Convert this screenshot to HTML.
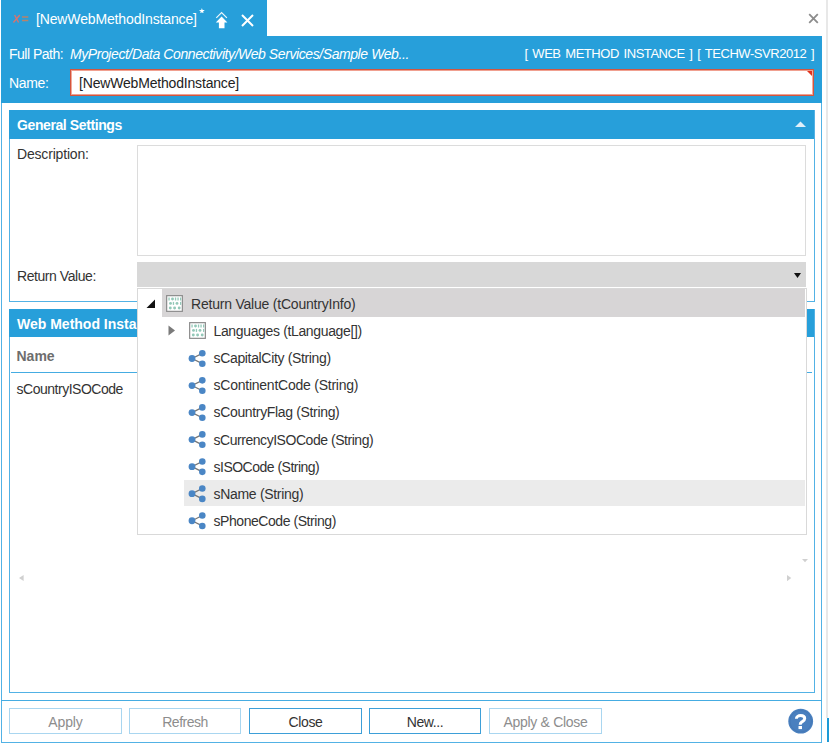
<!DOCTYPE html>
<html><head><meta charset="utf-8">
<style>
*{box-sizing:border-box;margin:0;padding:0}
html,body{width:829px;height:744px;overflow:hidden;background:#fff}
body{position:relative;font-family:"Liberation Sans",sans-serif;font-size:14px;color:#333}
.a{position:absolute}
.t{position:absolute;white-space:nowrap;line-height:16px}
.blue{background:#279fda}
.btn{position:absolute;top:708px;height:25.5px;border:1px solid #a9d6f0;background:#fff;color:#8d8d8d;text-align:center;line-height:16px;padding-top:5px;font-size:14px}
.btn.en{border-color:#3d9fd8;color:#333}
</style></head><body>

<!-- right gray edge -->
<div class="a" style="left:826px;top:0;width:2px;height:718px;background:#e8e8e8"></div>
<div class="a" style="left:826.5px;top:718px;width:2.5px;height:24px;background:#1e9ad6"></div>

<!-- tab -->
<div class="a blue" style="left:1px;top:0;width:266px;height:36px"></div>
<svg class="a" style="left:10px;top:12px" width="22" height="14" viewBox="0 0 22 14">
  <path d="M4.6 3 L8.6 10.5 M9.8 3 L3.4 10.5" stroke="#d9736e" stroke-width="1.4" fill="none"/>
  <path d="M12 5 H18.3 M12 8.5 H18.3" stroke="#b8836a" stroke-width="1.3" fill="none"/>
</svg>
<div class="t" style="left:36px;top:11px;color:#fff;letter-spacing:-0.14px">[NewWebMethodInstance]</div>
<svg class="a" style="left:199.2px;top:7.8px" width="5.8" height="5.5" viewBox="0 0 10 9.5">
  <path d="M5 0 L6.2 3.6 L10 3.6 L7 5.9 L8.1 9.5 L5 7.3 L1.9 9.5 L3 5.9 L0 3.6 L3.8 3.6Z" fill="#fff"/>
</svg>
<svg class="a" style="left:215px;top:11px" width="14" height="18" viewBox="0 0 14 18">
  <path d="M1.3 6.9 L6.6 1.6 L11.9 6.9" stroke="#fff" stroke-width="1.2" fill="none" opacity="0.92"/>
  <path d="M0.8 11.6 L6.6 5.6 L12.4 11.6 L9.5 11.6 L9.5 17.2 L3.9 17.2 L3.9 11.6Z" fill="#fff"/>
</svg>
<svg class="a" style="left:241px;top:14px" width="13" height="13" viewBox="0 0 13 13">
  <path d="M1 1 L12 12 M12 1 L1 12" stroke="#fff" stroke-width="2" fill="none"/>
</svg>
<svg class="a" style="left:807.5px;top:12.5px" width="11" height="11" viewBox="0 0 11 11">
  <path d="M1.2 1.2 L9.8 9.8 M9.8 1.2 L1.2 9.8" stroke="#8c8c8c" stroke-width="1.8" fill="none"/>
</svg>

<!-- header -->
<div class="a blue" style="left:1px;top:36px;width:821px;height:66.5px"></div>
<div class="t" style="left:9px;top:45.5px;color:#fff;letter-spacing:-0.5px">Full Path:</div>
<div class="t" style="left:70px;top:45.5px;color:#fff;font-style:italic;letter-spacing:-0.415px">MyProject/Data Connectivity/Web Services/Sample Web...</div>
<div class="t" style="left:524.5px;top:46px;color:#fff;font-size:13px;letter-spacing:-0.45px;word-spacing:1.5px">[ WEB METHOD INSTANCE ] [ TECHW-SVR2012 ]</div>
<div class="t" style="left:9px;top:75px;color:#fff;letter-spacing:-0.35px">Name:</div>
<div class="a" style="left:70px;top:69px;width:744px;height:27px;background:#fff;border:1.6px solid #d4553d;box-shadow:inset 0 0 0 0.9px #f0a090"></div>
<svg class="a" style="left:806.8px;top:71px" width="5.5" height="5.5" viewBox="0 0 5 5"><path d="M0 0 H5 V5Z" fill="#e0321c"/></svg>
<div class="t" style="left:79px;top:74.5px;color:#222;letter-spacing:-0.18px">[NewWebMethodInstance]</div>

<!-- outer frame -->
<div class="a" style="left:1px;top:102.5px;width:821.3px;height:640.5px;border:1.7px solid #52b2e5;border-top:none"></div>

<!-- General settings panel -->
<div class="a" style="left:8.8px;top:110px;width:806px;height:192px;border:1.5px solid #52b2e5"></div>
<div class="a blue" style="left:9px;top:110px;width:805px;height:29.3px"></div>
<div class="t" style="left:17px;top:116.5px;color:#fff;font-weight:bold;letter-spacing:-0.4px">General Settings</div>
<svg class="a" style="left:795px;top:121px" width="11" height="6" viewBox="0 0 11 6"><path d="M0 6 L5.5 0.5 L11 6Z" fill="#dff0fa"/></svg>
<div class="t" style="left:17px;top:146.3px;letter-spacing:-0.18px">Description:</div>
<div class="a" style="left:136.8px;top:145px;width:669.5px;height:110.5px;border:1.5px solid #dcdcdc"></div>
<div class="t" style="left:17px;top:267.9px;letter-spacing:-0.44px">Return Value:</div>
<div class="a" style="left:137px;top:262px;width:669px;height:25px;background:#d8d8d8"></div>
<svg class="a" style="left:794.3px;top:272.5px" width="7" height="5" viewBox="0 0 7 5"><path d="M0 0 H7 L3.5 5Z" fill="#111"/></svg>

<!-- Web Method Instance panel -->
<div class="a" style="left:8.8px;top:309px;width:806px;height:383.8px;border:1.5px solid #52b2e5"></div>
<div class="a blue" style="left:9px;top:309px;width:805px;height:27.5px"></div>
<div class="t" style="left:17px;top:315.5px;color:#fff;font-weight:bold;letter-spacing:0px">Web Method Instance</div>
<div class="t" style="left:16.5px;top:347.6px;color:#6d6d6d;font-weight:bold">Name</div>
<div class="a" style="left:11px;top:372px;width:801px;height:1.3px;background:#45ace2"></div>
<div class="t" style="left:16.5px;top:380.8px;letter-spacing:-0.48px">sCountryISOCode</div>
<svg class="a" style="left:18.5px;top:575px" width="5" height="6" viewBox="0 0 5 6"><path d="M4.6 0 V6 L0 3Z" fill="#d0d0d0"/></svg>
<svg class="a" style="left:787px;top:574.7px" width="5" height="6.2" viewBox="0 0 5 6.2"><path d="M0 0 V6.2 L4.3 3.1Z" fill="#d0d0d0"/></svg>
<svg class="a" style="left:802px;top:559.3px" width="6" height="4" viewBox="0 0 6 4"><path d="M0 0 H6 L3 3.3Z" fill="#d0d0d0"/></svg>

<!-- footer -->
<div class="a" style="left:1px;top:700px;width:821px;height:1.3px;background:#45ace2"></div>
<div class="btn" style="left:9px;width:113px;letter-spacing:-0.15px">Apply</div>
<div class="btn" style="left:129px;width:112px;letter-spacing:-0.5px">Refresh</div>
<div class="btn en" style="left:249px;width:113px;letter-spacing:-0.35px">Close</div>
<div class="btn en" style="left:369px;width:112px;letter-spacing:-0.38px">New...</div>
<div class="btn" style="left:489px;width:113px;letter-spacing:-0.3px">Apply &amp; Close</div>
<svg class="a" style="left:788px;top:708px" width="26" height="27" viewBox="0 0 26 27">
  <circle cx="12.7" cy="13.2" r="12.4" fill="#4a80bf"/>
  <circle cx="12.7" cy="13.2" r="10.8" fill="none" stroke="#4579b7" stroke-width="1"/>
  <path d="M8.4 10.8 C8.4 8.6 10.3 7.6 12.6 7.6 C15.0 7.6 16.7 8.8 16.7 10.6 C16.7 12.6 14.9 13.1 13.7 14.0 C12.6 14.8 12.2 15.5 12.2 16.8" stroke="#fff" stroke-width="3" fill="none"/>
  <rect x="10.5" y="18" width="3.5" height="3.1" fill="#fff"/>
</svg>

<!-- popup -->
<div class="a" style="left:136.8px;top:288px;width:670px;height:247px;background:#fff;border:1.5px solid #d9d9d9"></div>
<div class="a" style="left:162px;top:289px;width:643px;height:27.5px;background:#d7d5d6"></div>
<div class="a" style="left:184px;top:480px;width:621px;height:26px;background:#ebebeb"></div>

<svg class="a" style="left:146px;top:299px" width="10" height="10" viewBox="0 0 10 10"><path d="M9 0.5 V9 H0.5Z" fill="#111"/></svg>
<svg class="a" style="left:166px;top:295px" width="17" height="17" viewBox="0 0 17 17">
  <rect x="0.65" y="0.65" width="15.7" height="15.7" fill="#fff" stroke="#8c8c8c" stroke-width="1.2"/>
  <g fill="#93c8b8"><rect x="2.4" y="2.5" width="1.3" height="3"/><circle cx="6.5" cy="4" r="1.45"/><rect x="8.9" y="2.5" width="1.3" height="3"/><rect x="11.4" y="2.5" width="1.3" height="3"/><rect x="14" y="2.5" width="1.2" height="3"/>
  <circle cx="4.5" cy="8.4" r="1.45"/><rect x="6.8" y="6.9" width="1.3" height="3"/><circle cx="11" cy="8.4" r="1.45"/><rect x="14" y="6.9" width="1.2" height="3"/>
  <circle cx="4.3" cy="13" r="1.45"/><circle cx="8.6" cy="13" r="1.45"/><circle cx="13.2" cy="13" r="1.45"/></g>
</svg>
<div class="t" style="left:191px;top:296px;color:#333;letter-spacing:-0.21px">Return Value (tCountryInfo)</div>

<svg class="a" style="left:168px;top:325px" width="8" height="11" viewBox="0 0 8 11"><path d="M0.5 0.5 L7 5.5 L0.5 10.5Z" fill="#7a7a7a"/></svg>
<svg class="a" style="left:189px;top:321.8px" width="17" height="17" viewBox="0 0 17 17">
  <rect x="0.65" y="0.65" width="15.7" height="15.7" fill="#fff" stroke="#8c8c8c" stroke-width="1.2"/>
  <g fill="#93c8b8"><rect x="2.4" y="2.5" width="1.3" height="3"/><circle cx="6.5" cy="4" r="1.45"/><rect x="8.9" y="2.5" width="1.3" height="3"/><rect x="11.4" y="2.5" width="1.3" height="3"/><rect x="14" y="2.5" width="1.2" height="3"/>
  <circle cx="4.5" cy="8.4" r="1.45"/><rect x="6.8" y="6.9" width="1.3" height="3"/><circle cx="11" cy="8.4" r="1.45"/><rect x="14" y="6.9" width="1.2" height="3"/>
  <circle cx="4.3" cy="13" r="1.45"/><circle cx="8.6" cy="13" r="1.45"/><circle cx="13.2" cy="13" r="1.45"/></g>
</svg>
<div class="t" style="left:213.5px;top:323.2px;color:#333;letter-spacing:-0.355px">Languages (tLanguage[])</div>

<!-- share rows -->
<svg class="a" style="left:186px;top:345px" width="22" height="190" viewBox="0 0 22 190">
  <g transform="translate(0 0)"><path d="M6 13.5 L16.3 8.3 M6 13.5 L16.3 18.7" stroke="#777" stroke-width="1.3"/><circle cx="6" cy="13.5" r="3.4" fill="#4a86c5"/><circle cx="16.3" cy="8.3" r="3.3" fill="#4a86c5"/><circle cx="16.3" cy="18.7" r="3.3" fill="#4a86c5"/></g>
  <g transform="translate(0 27.04)"><path d="M6 13.5 L16.3 8.3 M6 13.5 L16.3 18.7" stroke="#777" stroke-width="1.3"/><circle cx="6" cy="13.5" r="3.4" fill="#4a86c5"/><circle cx="16.3" cy="8.3" r="3.3" fill="#4a86c5"/><circle cx="16.3" cy="18.7" r="3.3" fill="#4a86c5"/></g>
  <g transform="translate(0 54.08)"><path d="M6 13.5 L16.3 8.3 M6 13.5 L16.3 18.7" stroke="#777" stroke-width="1.3"/><circle cx="6" cy="13.5" r="3.4" fill="#4a86c5"/><circle cx="16.3" cy="8.3" r="3.3" fill="#4a86c5"/><circle cx="16.3" cy="18.7" r="3.3" fill="#4a86c5"/></g>
  <g transform="translate(0 81.12)"><path d="M6 13.5 L16.3 8.3 M6 13.5 L16.3 18.7" stroke="#777" stroke-width="1.3"/><circle cx="6" cy="13.5" r="3.4" fill="#4a86c5"/><circle cx="16.3" cy="8.3" r="3.3" fill="#4a86c5"/><circle cx="16.3" cy="18.7" r="3.3" fill="#4a86c5"/></g>
  <g transform="translate(0 108.16)"><path d="M6 13.5 L16.3 8.3 M6 13.5 L16.3 18.7" stroke="#777" stroke-width="1.3"/><circle cx="6" cy="13.5" r="3.4" fill="#4a86c5"/><circle cx="16.3" cy="8.3" r="3.3" fill="#4a86c5"/><circle cx="16.3" cy="18.7" r="3.3" fill="#4a86c5"/></g>
  <g transform="translate(0 135.2)"><path d="M6 13.5 L16.3 8.3 M6 13.5 L16.3 18.7" stroke="#777" stroke-width="1.3"/><circle cx="6" cy="13.5" r="3.4" fill="#4a86c5"/><circle cx="16.3" cy="8.3" r="3.3" fill="#4a86c5"/><circle cx="16.3" cy="18.7" r="3.3" fill="#4a86c5"/></g>
  <g transform="translate(0 162.24)"><path d="M6 13.5 L16.3 8.3 M6 13.5 L16.3 18.7" stroke="#777" stroke-width="1.3"/><circle cx="6" cy="13.5" r="3.4" fill="#4a86c5"/><circle cx="16.3" cy="8.3" r="3.3" fill="#4a86c5"/><circle cx="16.3" cy="18.7" r="3.3" fill="#4a86c5"/></g>
</svg>
<div class="t" style="left:213.5px;top:350px;letter-spacing:-0.34px">sCapitalCity (String)</div>
<div class="t" style="left:213.5px;top:377.2px;letter-spacing:-0.236px">sContinentCode (String)</div>
<div class="t" style="left:213.5px;top:404.4px;letter-spacing:-0.34px">sCountryFlag (String)</div>
<div class="t" style="left:213.5px;top:431.6px;letter-spacing:-0.458px">sCurrencyISOCode (String)</div>
<div class="t" style="left:213.5px;top:458.8px;letter-spacing:-0.506px">sISOCode (String)</div>
<div class="t" style="left:213.5px;top:486px;letter-spacing:-0.308px">sName (String)</div>
<div class="t" style="left:213.5px;top:513.2px;letter-spacing:-0.44px">sPhoneCode (String)</div>

</body></html>
